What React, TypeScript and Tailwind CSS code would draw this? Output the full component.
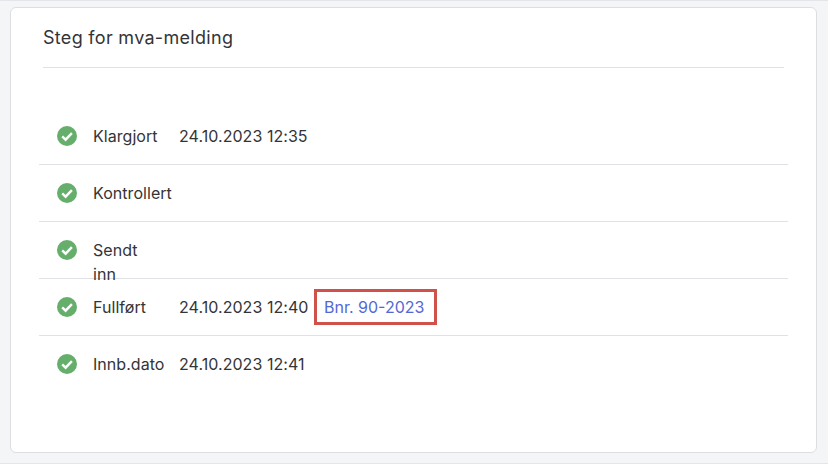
const Check = () => (
  <svg width="20" height="20" viewBox="0 0 20 20" className="shrink-0">
    <circle cx="10" cy="10" r="10" fill="#66ae6c" />
    <path d="M5.2 10.4 8.6 13.7 14.9 7.2" fill="none" stroke="#ffffff" strokeWidth="2.4" />
  </svg>
);

const rows = [
  { label: "Klargjort", date: "24.10.2023 12:35" },
  { label: "Kontrollert", date: "" },
  { label: "Sendt inn", date: "" },
  { label: "Fullført", date: "24.10.2023 12:40", link: "Bnr. 90-2023" },
  { label: "Innb.dato", date: "24.10.2023 12:41" },
];

export default function App() {
  return (
    <div className="h-[464px] w-[828px] overflow-hidden border-y border-[#e3e5e8] bg-[#f4f5f7] pl-[10px] pr-[11px] pt-[6px] font-['Inter',sans-serif] text-[#333438]">
      <div className="h-[446px] rounded-[6px] border border-[#dcdee2] bg-white pl-[28px] pr-[28px]">
        <div className="mx-[4px] flex h-[60px] items-center border-b border-[#dfe1e5] text-[18px] tracking-[0.3px]">
          Steg for mva-melding
        </div>
        <div className="mt-[40px]">
          {rows.map((r, i) => (
            <div
              key={r.label}
              className={`flex h-[57px] items-start pl-[18px] pt-[16px] text-[16px] leading-[24px] tracking-[0.05px] ${i < 4 ? "border-b border-[#dfe1e5]" : ""}`}
            >
              <div className="mr-[16px] flex h-[24px] items-center">
                <Check />
              </div>
              <div className="w-[86px] shrink-0 pr-[20px]">{r.label}</div>
              {r.date && <div className="w-[135px] shrink-0">{r.date}</div>}
              {r.link && (
                <div className="-mt-[6px] flex h-[36px] items-center border-[3px] border-[#d0504a] pl-[7px] pr-[10px] tracking-normal text-[#5468d4]">
                  {r.link}
                </div>
              )}
            </div>
          ))}
        </div>
      </div>
    </div>
  );
}
